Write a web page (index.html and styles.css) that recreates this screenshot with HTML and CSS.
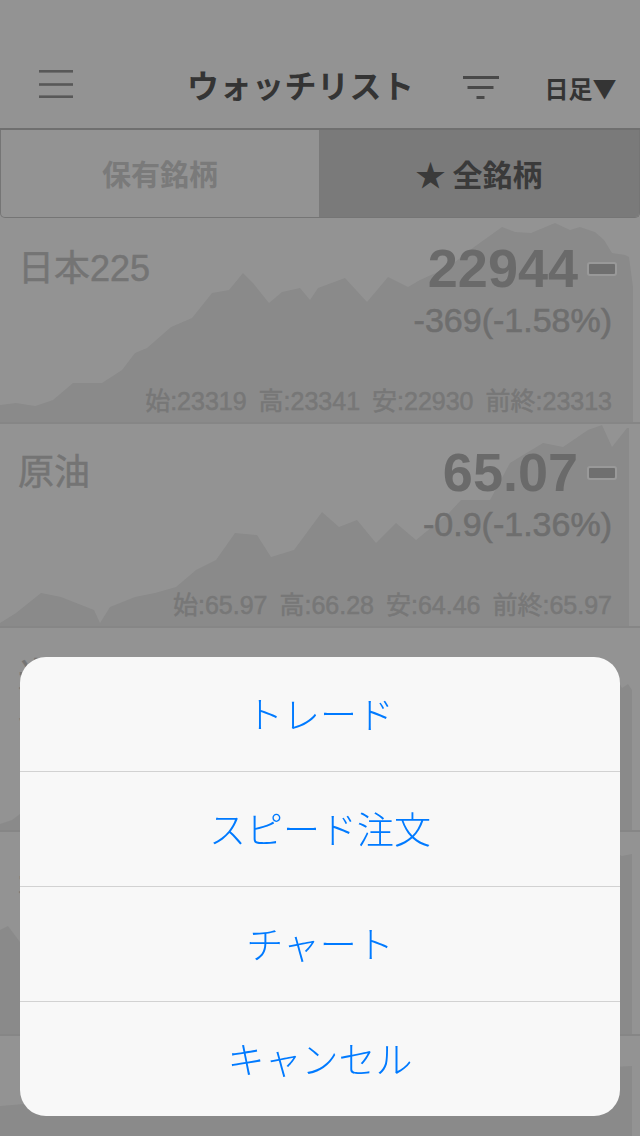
FILE: index.html
```html
<!DOCTYPE html>
<html lang="ja">
<head>
  <meta charset="UTF-8">
  <meta name="viewport" content="width=device-width, initial-scale=1.0">
  <title>ウォッチリスト</title>
  <link rel="stylesheet" href="styles.css">
</head>
<body>
  <div class="page">
    <div class="status-bar"></div>
    <header class="nav">
      <svg class="menu-icon" width="34" height="28" viewBox="0 0 34 28">
        <rect x="0" y="0" width="34" height="2.6"/>
        <rect x="0" y="13.2" width="34" height="2.6"/>
        <rect x="0" y="25.4" width="34" height="2.6"/>
      </svg>
      <h1 class="nav-title">ウォッチリスト</h1>
      <svg class="filter-icon" width="36" height="24" viewBox="0 0 36 24">
        <rect x="0" y="0" width="36" height="3"/>
        <rect x="4.5" y="10" width="26" height="3"/>
        <rect x="13.5" y="20" width="8" height="3"/>
      </svg>
      <div class="period">日足▼</div>
    </header>

    <div class="tabs">
      <div class="tab">保有銘柄</div>
      <div class="tab active">★ 全銘柄</div>
    </div>

    <div class="list">
      <div class="row">
        <svg class="chart" viewBox="0 0 640 202" preserveAspectRatio="none">
          <polygon points="0,185 16,183 35,186 53,180 73,163 102,163 122,150 135,133 147,128 171,107 192,98 212,73 229,70 243,53 253,63 269,83 282,72 300,68 310,80 318,68 345,58 367,82 388,57 408,67 420,60 449,47 470,30 502,7 515,12 531,13 543,8 555,3 570,10 580,7 595,12 604,20 612,33 625,35 629,37 633,67 633,202 0,202"/>
        </svg>
        <div class="row-top">
          <div class="name">日本225</div>
          <div class="quote">
            <div class="price-line">
              <span class="price">22944</span>
              <span class="flat"></span>
            </div>
            <div class="change">-369(-1.58%)</div>
          </div>
        </div>
        <div class="ohlc">
          <span>始:23319</span><span>高:23341</span><span>安:22930</span><span>前終:23313</span>
        </div>
      </div>

      <div class="row">
        <svg class="chart" viewBox="0 0 640 202" preserveAspectRatio="none">
          <polygon points="0,199 16,189 41,169 61,173 94,186 100,199 110,183 135,173 155,169 176,163 196,146 216,136 235,109 257,111 271,133 294,126 322,88 339,103 357,96 376,119 396,99 416,116 449,89 461,76 490,76 510,39 543,19 563,23 588,6 602,1 612,23 627,4 629,4 629,202 0,202"/>
        </svg>
        <div class="row-top">
          <div class="name">原油</div>
          <div class="quote">
            <div class="price-line">
              <span class="price">65.07</span>
              <span class="flat"></span>
            </div>
            <div class="change">-0.9(-1.36%)</div>
          </div>
        </div>
        <div class="ohlc">
          <span>始:65.97</span><span>高:66.28</span><span>安:64.46</span><span>前終:65.97</span>
        </div>
      </div>

      <div class="row">
        <svg class="chart" viewBox="0 0 640 202" preserveAspectRatio="none">
          <polygon points="0,196 12,192 20,186 60,178 110,160 160,150 220,120 280,128 330,96 380,104 430,80 480,88 530,52 570,40 600,30 615,48 622,60 628,56 632,62 632,202 0,202"/>
        </svg>
        <div class="row-top">
          <div class="name">米国<br>S&amp;P500</div>
        </div>
      </div>

      <div class="row">
        <svg class="chart" viewBox="0 0 640 202" preserveAspectRatio="none">
          <polygon points="0,98 8,94 20,110 60,120 120,100 180,90 240,70 300,80 360,60 420,66 480,40 540,30 580,24 610,18 622,24 632,22 632,202 0,202"/>
        </svg>
        <div class="row-top">
          <div class="name">米国30</div>
        </div>
      </div>

      <div class="row">
        <svg class="chart" viewBox="0 0 640 202" preserveAspectRatio="none">
          <polygon points="0,70 120,60 260,50 400,44 520,36 632,30 632,202 0,202"/>
        </svg>
      </div>
    </div>
  </div>

  <div class="dim"></div>

  <div class="sheet">
    <div class="sheet-item">トレード</div>
    <div class="sheet-item">スピード注文</div>
    <div class="sheet-item">チャート</div>
    <div class="sheet-item">キャンセル</div>
  </div>
</body>
</html>
```

FILE: styles.css
```css
body {
  margin: 0;
  font-family: "Liberation Sans", "Noto Sans CJK JP", sans-serif;
  background-color: #f5f5f5;
  overflow: hidden;
}

.page {
  width: 640px;
  height: 1136px;
  overflow: hidden;
}

.status-bar {
  height: 40px;
}

.nav {
  height: 90px;
  border-bottom: 2px solid #b9b9b9;
  display: flex;
  align-items: center;
  box-sizing: border-box;
}

.menu-icon {
  margin-left: 39px;
  fill: #939393;
}

.nav-title {
  margin: 0 0 0 114px;
  font-family: "Noto Sans CJK JP", sans-serif;
  font-size: 32px;
  font-weight: 700;
  letter-spacing: 0.5px;
  color: #585858;
  line-height: 1;
}

.filter-icon {
  margin-left: 48px;
  margin-top: 8px;
  fill: #7b7b7b;
}

.period {
  margin-left: 46px;
  margin-top: 8px;
  font-family: "Noto Sans CJK JP", sans-serif;
  font-size: 24px;
  font-weight: 700;
  color: #585858;
  line-height: 1;
}

.tabs {
  display: flex;
  height: 88px;
  border: 1px solid #c4c4c4;
  border-top: none;
  border-radius: 0 0 5px 5px;
  overflow: hidden;
  box-sizing: border-box;
  margin-bottom: 2px;
}

.tab {
  display: flex;
  align-items: center;
  justify-content: center;
  font-family: "Noto Sans CJK JP", sans-serif;
  font-size: 29px;
  font-weight: 700;
  color: #cbcbcb;
  width: 318px;
  padding-bottom: 2px;
}

.tab.active {
  flex: 1;
  background-color: #cbcbcb;
  color: #616161;
  font-size: 30px;
}

.row {
  position: relative;
  height: 204px;
  border-bottom: 2px solid #dfdfdf;
  box-sizing: border-box;
  display: flex;
  flex-direction: column;
  padding: 21px 23px 8px 18px;
}

.chart {
  position: absolute;
  left: 0;
  top: 0;
  width: 640px;
  height: 202px;
  fill: #e6e6e6;
}

.row-top {
  position: relative;
  display: flex;
  justify-content: space-between;
}

.name {
  margin-top: 10px;
  font-size: 36px;
  line-height: 36px;
  color: #c2c2c2;
  -webkit-text-stroke: 0.5px #c2c2c2;
}

.quote {
  display: flex;
  flex-direction: column;
  align-items: flex-end;
}

.price-line {
  display: flex;
  align-items: center;
}

.price {
  font-size: 54px;
  font-weight: 700;
  line-height: 54px;
  color: #b1b1b1;
}

.flat {
  width: 30px;
  height: 14px;
  margin-left: 9px;
  margin-top: 2px;
  box-sizing: border-box;
  border: 2px solid #ffffff;
  border-radius: 3px;
  background-color: #b9b9b9;
}

.change {
  margin-top: 8px;
  margin-right: 5px;
  font-size: 34px;
  line-height: 34px;
  color: #b8b8b8;
  -webkit-text-stroke: 0.6px #b8b8b8;
}

.ohlc {
  position: relative;
  margin-top: auto;
  margin-right: 5px;
  display: flex;
  justify-content: flex-end;
  gap: 12px;
  font-size: 25px;
  line-height: 25px;
  color: #c6c6c6;
  -webkit-text-stroke: 0.5px #c6c6c6;
}

.dim {
  position: fixed;
  left: 0;
  top: 0;
  right: 0;
  bottom: 0;
  background-color: rgba(0, 0, 0, 0.4);
}

.sheet {
  position: fixed;
  left: 20px;
  right: 20px;
  bottom: 20px;
  background-color: #f8f8f8;
  border-radius: 26px;
  overflow: hidden;
}

.sheet-item {
  height: 112px;
  padding-bottom: 2px;
  display: flex;
  align-items: center;
  justify-content: center;
  font-family: "Noto Sans CJK JP", sans-serif;
  font-size: 37px;
  font-weight: 300;
  color: #007aff;
  border-top: 1px solid #d2d2d2;
}

.sheet-item:first-child {
  border-top: none;
}
```
